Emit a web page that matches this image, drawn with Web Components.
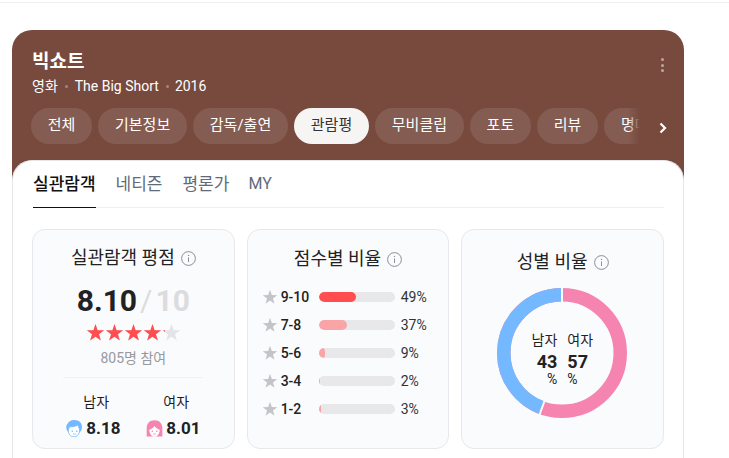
<!DOCTYPE html>
<html lang="ko">
<head>
<meta charset="utf-8">
<title>빅쇼트</title>
<style>
	html, body { margin: 0; height: 458px; overflow: hidden; background: #fff; }
	body { font-family: Roboto, "Noto Sans CJK KR", sans-serif; color: #1c1c1e; }
	.topline { height: 1px; margin-top: 2px; background: #f0f0f2; }
</style>
</head>
<body>
<div class="topline"></div>
<movie-panel></movie-panel>

<script>
const STAR = 'M12 1.3L14.7 9.1 22.9 9.3 16.4 14.2 18.8 22.1 12 17.4 5.2 22.1 7.6 14.2 1.100 9.3 9.300 9.100z';

class InfoIcon extends HTMLElement {
	constructor() {
		super();
		this.attachShadow({mode: 'open'});
		this.shadowRoot.innerHTML = `
			<style>
				:host { display: inline-flex; width: 15px; height: 15px; }
			</style>
			<svg width="15" height="15" viewBox="0 0 15 15" fill="none">
				<circle cx="7.5" cy="7.5" r="6.9" stroke="#8e8e93"/>
				<path d="M7.5 6.4v4.6" stroke="#8e8e93"/>
				<circle cx="7.5" cy="4.4" r=".7" fill="#8e8e93"/>
			</svg>
		`;
	}
}
customElements.define('info-icon', InfoIcon);

class StatCard extends HTMLElement {
	constructor() {
		super();
		this.attachShadow({mode: 'open'});
		this.shadowRoot.innerHTML = `
			<style>
				:host {
					display: block;
					box-sizing: border-box;
					height: 220px;
					background: #fafbfd;
					border: 1px solid #e8e8ec;
					border-radius: 13px;
				}
				h3 {
					display: flex;
					justify-content: center;
					align-items: center;
					gap: 6px;
					margin: 0;
					font-size: 18px;
					font-weight: 400;
					line-height: 24px;
					color: #222;
				}
			</style>
			<h3><span id="title"></span><info-icon></info-icon></h3>
			<slot></slot>
		`;
	}

	connectedCallback() {
		this.shadowRoot.querySelector('#title').textContent = this.getAttribute('heading');
		this.shadowRoot.querySelector('h3').style.marginTop = (this.getAttribute('top') || 16) + 'px';
	}
}
customElements.define('stat-card', StatCard);

class StarRating extends HTMLElement {
	constructor() {
		super();
		this.attachShadow({mode: 'open'});
		const row = (fill) => Array.from({length: 5}, () =>
			`<svg width="19" height="19" viewBox="0 0 24 24"><path d="${STAR}" fill="${fill}"/></svg>`).join('');
		this.shadowRoot.innerHTML = `
			<style>
				:host { display: block; position: relative; width: 95px; height: 19px; }
				div { display: flex; height: 19px; }
				#on { position: absolute; left: 0; top: 0; overflow: hidden; }
				svg { flex: none; }
			</style>
			<div>${row('#e3e4e8')}</div>
			<div id="on">${row('#ff4d50')}</div>
		`;
	}

	connectedCallback() {
		this.shadowRoot.querySelector('#on').style.width = this.getAttribute('value') + '%';
	}
}
customElements.define('star-rating', StarRating);

class FaceIcon extends HTMLElement {
	static get observedAttributes() {
		return ['kind'];
	}

	constructor() {
		super();
		this.attachShadow({mode: 'open'});
	}

	attributeChangedCallback() {
		const girl = this.getAttribute('kind') === 'girl';
		const ink = girl ? '#f585b0' : '#74b9ff';
		const hair = girl
			? `<path d="M8.500 1C4 1 1.500 4 1.500 8v7.500h14V8c0-4-2.500-7-7-7z" fill="${ink}"/>`
			: `<path d="M2.500 11C.8 9 .6 5.500 2.500 4 3.500 1.500 6.500.4 9.500 1c2.800 0 5 2 5.500 4.500.5 2-.1 4-1 5.500z" fill="${ink}"/>`;
		const face = girl
			? `<path d="M3.800 9.500C5.800 9 7.400 7.800 8.500 6.200c1 1.600 2.700 2.800 4.700 3.300-.2 3.500-2 6.300-4.700 6.300s-4.500-2.800-4.700-6.300z" fill="#fff"/>`
			: `<path d="M3 9.500c.5-.8.7-1.700.8-2.800 2.500.4 5.800.1 7.400-1.600.6 1 1.300 2.300 1.800 3.800.5 3.700-1.800 7-5 7s-5.300-2.900-5-6.400z" fill="#fff" stroke="${ink}" stroke-width=".8"/>`;
		this.shadowRoot.innerHTML = `
			<style>
				:host { display: inline-flex; width: 17px; height: 17px; }
			</style>
			<svg width="17" height="17" viewBox="1 .8 15 15.2">
				${hair}${face}
				<circle cx="6.500" cy="10.800" r=".7" fill="${ink}"/>
				<circle cx="10.500" cy="10.800" r=".7" fill="${ink}"/>
				<path d="M7.200 13c.8.600 1.800.600 2.600 0" fill="none" stroke="${ink}" stroke-width=".7"/>
			</svg>
		`;
	}
}
customElements.define('face-icon', FaceIcon);

class GenderScore extends HTMLElement {
	constructor() {
		super();
		this.attachShadow({mode: 'open'});
		this.shadowRoot.innerHTML = `
			<style>
				:host { display: flex; flex: none; flex-direction: column; align-items: flex-start; width: 80px; }
				#label { padding-left: 17px; font-size: 14px; line-height: 20px; color: #1c1c1e; }
				#score { display: flex; align-items: center; gap: 3px; margin-top: 4px; }
				b { font: 700 17px/24px Roboto, sans-serif; color: #222; }
			</style>
			<span id="label"></span>
			<span id="score"><face-icon></face-icon><b></b></span>
		`;
	}

	connectedCallback() {
		this.shadowRoot.querySelector('#label').textContent = this.getAttribute('label');
		this.shadowRoot.querySelector('face-icon').setAttribute('kind', this.getAttribute('kind'));
		this.shadowRoot.querySelector('b').textContent = this.getAttribute('score');
	}
}
customElements.define('gender-score', GenderScore);

class AudienceScore extends HTMLElement {
	constructor() {
		super();
		this.attachShadow({mode: 'open'});
		this.shadowRoot.innerHTML = `
			<style>
				:host { display: flex; flex-direction: column; align-items: center; }
				#big {
					display: flex;
					align-items: baseline;
					margin-top: 11px;
					font: 700 30px/40px Roboto, sans-serif;
					color: #222;
				}
				#big i { font-style: normal; font-weight: 400; color: #dcdcdf; margin: 0 3px; }
				#big span { color: #dcdcdf; }
				star-rating { margin-top: 2px; }
				#count { margin-top: 6px; font-size: 14px; line-height: 20px; color: #98989d; }
				#split {
					display: flex;
					width: 140px;
					margin-top: 9px;
					padding: 14px 0 0 3px;
					box-sizing: border-box;
					border-top: 1px solid #f2f2f5;
				}
			</style>
			<div id="big">8.10<i>/</i><span>10</span></div>
			<star-rating value="83"></star-rating>
			<div id="count">805명 참여</div>
			<div id="split">
				<gender-score label="남자" kind="boy" score="8.18"></gender-score>
				<gender-score label="여자" kind="girl" score="8.01"></gender-score>
			</div>
		`;
	}
}
customElements.define('audience-score', AudienceScore);

class ScoreBar extends HTMLElement {
	constructor() {
		super();
		this.attachShadow({mode: 'open'});
		this.shadowRoot.innerHTML = `
			<style>
				:host { display: flex; align-items: center; height: 28px; font-size: 14px; color: #222; }
				svg { flex: none; margin-right: 3px; }
				#range { width: 38px; font: 500 14px Roboto, sans-serif; }
				#track { width: 76px; height: 10px; border-radius: 5px; background: #e8e8ea; overflow: hidden; }
				#fill { height: 100%; border-radius: 5px; }
				#pct { margin-left: 6px; font-size: 14px; color: #333; }
			</style>
			<svg width="16" height="16" viewBox="0 0 24 24"><path d="${STAR}" fill="#c4c4c8"/></svg>
			<span id="range"></span>
			<div id="track"><div id="fill"></div></div>
			<span id="pct"></span>
		`;
	}

	connectedCallback() {
		const pct = this.getAttribute('pct');
		this.shadowRoot.querySelector('#range').textContent = this.getAttribute('range');
		this.shadowRoot.querySelector('#pct').textContent = pct + '%';
		const fill = this.shadowRoot.querySelector('#fill');
		fill.style.width = pct + '%';
		fill.style.background = this.hasAttribute('top-score') ? '#ff4d50' : '#f9a5a8';
	}
}
customElements.define('score-bar', ScoreBar);

class GenderDonut extends HTMLElement {
	constructor() {
		super();
		this.attachShadow({mode: 'open'});
		this.shadowRoot.innerHTML = `
			<style>
				:host { display: block; position: relative; width: 130px; height: 130px; margin: 14px 0 0 35px; }
				svg { display: block; }
				#center {
					position: absolute;
					inset: 0;
					box-sizing: border-box;
					padding-top: 42px;
					display: grid;
					grid-template-columns: 1fr 1fr;
					grid-auto-rows: min-content;
					column-gap: 10px;
				}
				#center div { display: flex; flex-direction: column; }
				#center div:first-child { align-items: flex-end; }
				#center div:last-child { align-items: flex-start; }
				span { font-size: 14px; line-height: 20px; color: #222; white-space: nowrap; }
				b { font: 700 18px/22px Roboto, sans-serif; color: #222; margin-top: 1px; }
				i { font: 400 14px/12px Roboto, sans-serif; color: #222; }
			</style>
			<svg width="130" height="130" viewBox="0 0 130 130" fill="none" stroke-width="13.500">
				<circle cx="65" cy="65" r="58.250" stroke="#f585b0"/>
				<circle cx="65" cy="65" r="58.250" stroke="#74b9ff" pathLength="100" stroke-dasharray="44.400 55.600" transform="rotate(-90 65 65) scale(1 -1) translate(0 -130)"/>
				<path d="M65 0v14" stroke="#fafbfd" stroke-width="2"/>
				<path d="M47.900 112L42.400 127" stroke="#fafbfd" stroke-width="2"/>
			</svg>
			<div id="center">
				<div><span>남자</span><b>43</b><i>%</i></div>
				<div><span>여자</span><b>57</b><i>%</i></div>
			</div>
		`;
	}
}
customElements.define('gender-donut', GenderDonut);

class CategoryChips extends HTMLElement {
	constructor() {
		super();
		this.attachShadow({mode: 'open'});
		const items = ['전체', '기본정보', '감독/출연', '관람평', '무비클립', '포토', '리뷰', '명대사'];
		this.shadowRoot.innerHTML = `
			<style>
				:host { display: flex; align-items: center; position: relative; height: 36px; }
				#list { display: flex; gap: 6px; width: 609px; overflow: hidden; }
				a {
					flex: none;
					padding: 0 16.800px;
					height: 36px;
					line-height: 35px;
					border-radius: 18px;
					font-size: 15px;
					color: #fff;
					background: rgba(255, 255, 255, .1);
				}
				a.on { background: #f7f5f3; color: #333; }
				#fade {
					position: absolute;
					left: 597px;
					top: 0;
					width: 13px;
					height: 36px;
					background: linear-gradient(to right, rgba(120, 74, 62, 0), #784a3e 90%);
				}
				svg { position: absolute; left: 627px; top: 14px; }
			</style>
			<div id="list">${items.map(t => `<a class="${t === '관람평' ? 'on' : ''}">${t}</a>`).join('')}</div>
			<div id="fade"></div>
			<svg width="10" height="12" viewBox="0 0 10 12" fill="none"><path d="M2.500 1.500L7 6l-4.500 4.500" stroke="#fff" stroke-width="2.200"/></svg>
		`;
	}
}
customElements.define('category-chips', CategoryChips);

class ReviewTabs extends HTMLElement {
	constructor() {
		super();
		this.attachShadow({mode: 'open'});
		this.shadowRoot.innerHTML = `
			<style>
				:host { display: flex; gap: 20px; height: 47px; margin-left: 1px; box-sizing: border-box; border-bottom: 1px solid #f0f0f2; }
				a { height: 47px; box-sizing: border-box; line-height: 46px; font-size: 17px; color: #5f6b7a; }
				a.on { color: #111; font-weight: 500; border-bottom: 1px solid #111; }
				a.en { font-size: 16px; margin-left: -1px; }
			</style>
			<a class="on">실관람객</a><a>네티즌</a><a>평론가</a><a class="en">MY</a>
		`;
	}
}
customElements.define('review-tabs', ReviewTabs);

class MoviePanel extends HTMLElement {
	constructor() {
		super();
		this.attachShadow({mode: 'open'});
		this.shadowRoot.innerHTML = `
			<style>
				:host {
					display: block;
					width: 672px;
					margin: 27px 0 0 12px;
					border-radius: 20px 20px 0 0;
					background: #784a3e;
				}
				header { position: relative; height: 130px; box-sizing: border-box; padding: 20px 20px 0; }
				h1 { margin: 0; font-size: 19px; line-height: 24px; font-weight: 700; color: #fff; }
				p { display: flex; align-items: center; margin: 2px 0 12px; font-size: 14px; line-height: 20px; color: #fff; }
				p i { width: 3px; height: 3px; margin: 0 7px; border-radius: 50%; background: #a58478; }
				p i:last-of-type { margin-right: 6px; }
				category-chips { margin-left: -1px; }
				#more { position: absolute; left: 649px; top: 28px; display: flex; flex-direction: column; gap: 2.500px; }
				#more i { width: 3px; height: 3px; border-radius: 50%; background: #bda69e; }
				main {
					box-sizing: border-box;
					height: 298px;
					padding: 0 19px;
					background: #fff;
					border: 1px solid #e5e5ea;
					border-bottom: 0;
					border-radius: 20px 20px 0 0;
				}
				#cards { display: grid; grid-template-columns: repeat(3, 1fr); gap: 12px; margin-top: 21px; }
				#bars { margin: 12px 0 0 14px; }
			</style>
			<header>
				<h1>빅쇼트</h1>
				<p>영화<i></i>The Big Short<i></i>2016</p>
				<category-chips></category-chips>
				<div id="more"><i></i><i></i><i></i></div>
			</header>
			<main>
				<review-tabs></review-tabs>
				<div id="cards">
					<stat-card heading="실관람객 평점" top="16"><audience-score></audience-score></stat-card>
					<stat-card heading="점수별 비율" top="17">
						<div id="bars">
							<score-bar range="9-10" pct="49" top-score></score-bar>
							<score-bar range="7-8" pct="37"></score-bar>
							<score-bar range="5-6" pct="9"></score-bar>
							<score-bar range="3-4" pct="2"></score-bar>
							<score-bar range="1-2" pct="3"></score-bar>
						</div>
					</stat-card>
					<stat-card heading="성별 비율" top="20"><gender-donut></gender-donut></stat-card>
				</div>
			</main>
		`;
	}
}
customElements.define('movie-panel', MoviePanel);
</script>
</body>
</html>
